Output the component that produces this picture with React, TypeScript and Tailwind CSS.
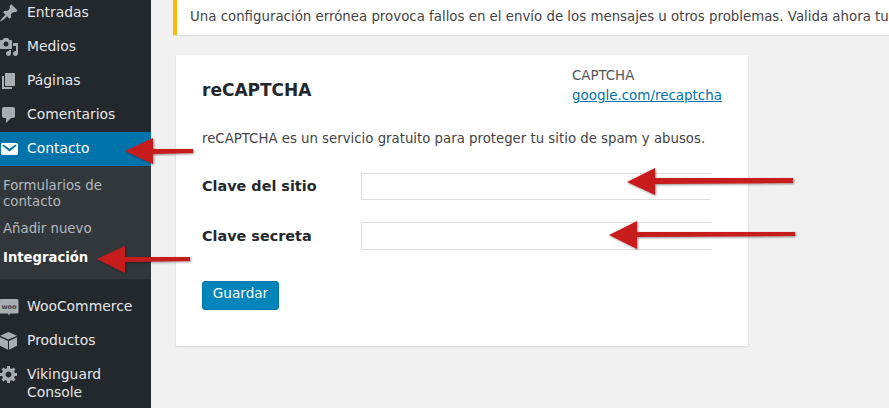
const icons: Record<string, string> = {
  pin: "M10.44 3.02l1.82-1.82 6.36 6.35-1.83 1.82c-1.05-.68-2.48-.57-3.41.36l-.75.75c-.92.93-1.04 2.35-.35 3.41l-1.83 1.82-2.41-2.41-2.8 2.79c-.42.42-3.38 2.71-3.8 2.29s1.86-3.39 2.28-3.81l2.79-2.79L4.1 9.36l1.83-1.82c1.05.69 2.48.57 3.4-.36l.75-.75c.93-.92 1.05-2.35.36-3.41z",
  media: "M13 11V4c0-.55-.45-1-1-1h-1.67L9 1H5L3.67 3H2c-.55 0-1 .45-1 1v7c0 .55.45 1 1 1h10c.55 0 1-.45 1-1zM7 4.5c1.38 0 2.5 1.12 2.5 2.5S8.38 9.5 7 9.5 4.5 8.38 4.5 7 5.62 4.5 7 4.5zM14 6h5v10.5c0 1.38-1.12 2.5-2.5 2.5S14 17.88 14 16.5s1.12-2.5 2.5-2.5c.17 0 .34.02.5.05V9h-3V6zm-4 8.05V13h2v3.5c0 1.38-1.12 2.5-2.5 2.5S7 17.88 7 16.5 8.12 14 9.5 14c.17 0 .34.02.5.05z",
  page: "M6 15V2h10v13H6zm-1 1h8v2H3V5h2v11z",
  comment: "M5 2h9c1.1 0 2 .9 2 2v7c0 1.1-.9 2-2 2h-2l-5 5v-5H5c-1.1 0-2-.9-2-2V4c0-1.1.9-2 2-2z",
  mail: "M3.87 4h13.25C18.37 4 19 4.59 19 5.79v8.42c0 1.19-.63 1.79-1.88 1.79H3.87c-1.25 0-1.88-.6-1.88-1.79V5.79c0-1.2.63-1.79 1.88-1.79zm6.62 8.6l6.74-5.53c.24-.2.43-.66.13-1.07-.29-.41-.82-.42-1.17-.17l-5.7 3.86L4.8 5.83c-.35-.25-.88-.24-1.17.17-.3.41-.11.87.13 1.07z",
  box: "M9.5 1L1 4.8l8.5 3.8L18 4.8zM1 6.2v8.6l8 3.9V10zM18 6.2L10 10v8.7l8-3.9z",
  gear: "M18 12h-2.18c-.17.7-.44 1.35-.81 1.93l1.54 1.54-2.1 2.1-1.54-1.54c-.58.36-1.23.63-1.91.79V19H8v-2.18c-.68-.16-1.33-.43-1.91-.79l-1.54 1.54-2.12-2.12 1.54-1.54c-.36-.58-.63-1.23-.79-1.91H1V9.03h2.17c.16-.7.44-1.35.8-1.94L2.43 5.55l2.1-2.1 1.54 1.54c.58-.37 1.24-.64 1.93-.81V2h3v2.18c.68.16 1.33.43 1.91.79l1.54-1.54 2.12 2.12-1.54 1.54c.36.59.64 1.24.8 1.94H18V12zm-8.5 1.5c1.66 0 3-1.34 3-3s-1.34-3-3-3-3 1.34-3 3 1.34 3 3 3z",
};

function MenuIcon({ name, white }: { name: string; white?: boolean }) {
  return (
    <svg viewBox="0 0 20 20" className={`w-5 h-5 shrink-0 ${white ? "fill-white" : "fill-[#a8adb2]"}`}>
      <path d={icons[name]} />
    </svg>
  );
}

function WooIcon() {
  return (
    <svg viewBox="0 0 20 20" className="w-5 h-5 shrink-0">
      <path d="M2 2h16a1.5 1.5 0 0 1 1.5 1.5v11.5a1.5 1.5 0 0 1-1.5 1.5h-7l-1 2.2-1-2.2H2A1.5 1.5 0 0 1 .5 15V3.5A1.5 1.5 0 0 1 2 2z" fill="#a8adb2" />
      <text x="10" y="11.5" textAnchor="middle" fontSize="6.5" fontWeight="700" fill="#3a3f44">
        woo
      </text>
    </svg>
  );
}

function MenuItem({ label, icon }: { label: string; icon: string }) {
  return (
    <div className="flex items-center h-[34px] -ml-px text-[#e6e7e8]">
      {icon === "woo" ? <WooIcon /> : <MenuIcon name={icon} />}
      <span className="ml-2 pb-[2px]">{label}</span>
    </div>
  );
}

// red marker arrows painted on top of the screenshot
const arrows = [
  "M125 151 L153 138 L153 149 L193 149 L193 153 L153 154 L153 164 Z",
  "M97 259 L125 246 L125 257 L190 257 L190 261 L125 262 L125 273 Z",
  "M627 182 L655 168 L655 178 L793 178 L793 183 L655 184 L655 195 Z",
  "M609 235 L637 221 L637 232 L795 232 L795 236 L637 237 L637 249 Z",
];

export default function App() {
  return (
    <div className="relative flex w-[889px] h-[408px] overflow-hidden bg-[#f1f1f1] font-['DejaVu_Sans',sans-serif] text-[13.35px] text-[#444]">
      <aside className="w-[151px] shrink-0 bg-[#23282d] text-[13.9px]">
        <div className="-mt-[4px]">
          <MenuItem label="Entradas" icon="pin" />
          <MenuItem label="Medios" icon="media" />
          <MenuItem label="Páginas" icon="page" />
          <MenuItem label="Comentarios" icon="comment" />
        </div>
        <div className="flex items-center h-[34px] bg-[#0073aa] text-white">
          <div className="-ml-px flex items-center">
            <MenuIcon name="mail" white />
            <span className="ml-2 pb-[2px]">Contacto</span>
          </div>
        </div>
        <div className="h-[113px] bg-[#32373c] pt-[12px] pl-[3px] text-[#b4b9be] text-[13.3px] leading-4">
          <div>
            Formularios de
            <br />
            contacto
          </div>
          <div className="mt-[11px]">Añadir nuevo</div>
          <div className="mt-[13px] font-bold text-white text-[13.2px]">Integración</div>
        </div>
        <div className="mt-[11px]">
          <MenuItem label="WooCommerce" icon="woo" />
          <MenuItem label="Productos" icon="box" />
          <div className="flex -ml-px pt-[7px] text-[#e6e7e8]">
            <div className="mt-[-1px]">
              <MenuIcon name="gear" />
            </div>
            <span className="ml-2 leading-[18px]">
              Vikinguard
              <br />
              Console
            </span>
          </div>
        </div>
      </aside>

      <main className="flex-1 min-w-0 pl-[22px]">
        <div className="flex items-center h-[36px] -mt-px border-l-4 border-[#ffb900] bg-white pl-[13px] whitespace-nowrap overflow-hidden shadow-[0_1px_1px_rgba(0,0,0,0.08)]">
          Una configuración errónea provoca fallos en el envío de los mensajes u otros problemas. Valida ahora tu
        </div>

        <section className="ml-[3px] mt-[20px] w-[572px] h-[291px] bg-white px-[26px] shadow-[0_1px_2px_rgba(0,0,0,0.12)]">
          <div className="flex justify-between h-[62px] pr-0">
            <h2 className="mt-[25px] text-[17px] leading-5 font-bold text-[#23282d]">reCAPTCHA</h2>
            <div className="mt-[11px] leading-[20px]">
              <div className="text-[#555]">CAPTCHA</div>
              <a href="#" className="text-[#0073aa] underline text-[13.45px]">
                google.com/recaptcha
              </a>
            </div>
          </div>
          <p className="mt-[12px] leading-5 text-[13.3px]">reCAPTCHA es un servicio gratuito para proteger tu sitio de spam y abusos.</p>
          <div className="mt-[24px] flex items-center h-[27px]">
            <label className="w-[159px] font-bold text-[#23282d] text-[14.4px]">Clave del sitio</label>
            <div className="w-[350px] h-full bg-white border border-r-0 border-[#ddd]" />
          </div>
          <div className="mt-[22px] flex items-center h-[28px]">
            <label className="w-[159px] pt-[2px] font-bold text-[#23282d] text-[14.4px]">Clave secreta</label>
            <div className="w-[350px] h-full bg-white border border-r-0 border-[#ddd]" />
          </div>
          <button className="mt-[31px] w-[77px] h-[29px] pb-[5px] rounded-[3px] bg-[#0085ba] border border-[#0073aa] text-white text-center text-[13.6px]">
            Guardar
          </button>
        </section>
      </main>

      <svg viewBox="0 0 889 408" className="absolute inset-0 w-[889px] h-[408px] pointer-events-none">
        <defs>
          <filter id="arrowShadow" x="-10%" y="-30%" width="120%" height="160%">
            <feDropShadow dx="1" dy="1" stdDeviation="1.2" floodColor="#000" floodOpacity="0.45" />
          </filter>
        </defs>
        {arrows.map((d) => (
          <path key={d} d={d} fill="#c71c1c" filter="url(#arrowShadow)" />
        ))}
      </svg>
    </div>
  );
}
